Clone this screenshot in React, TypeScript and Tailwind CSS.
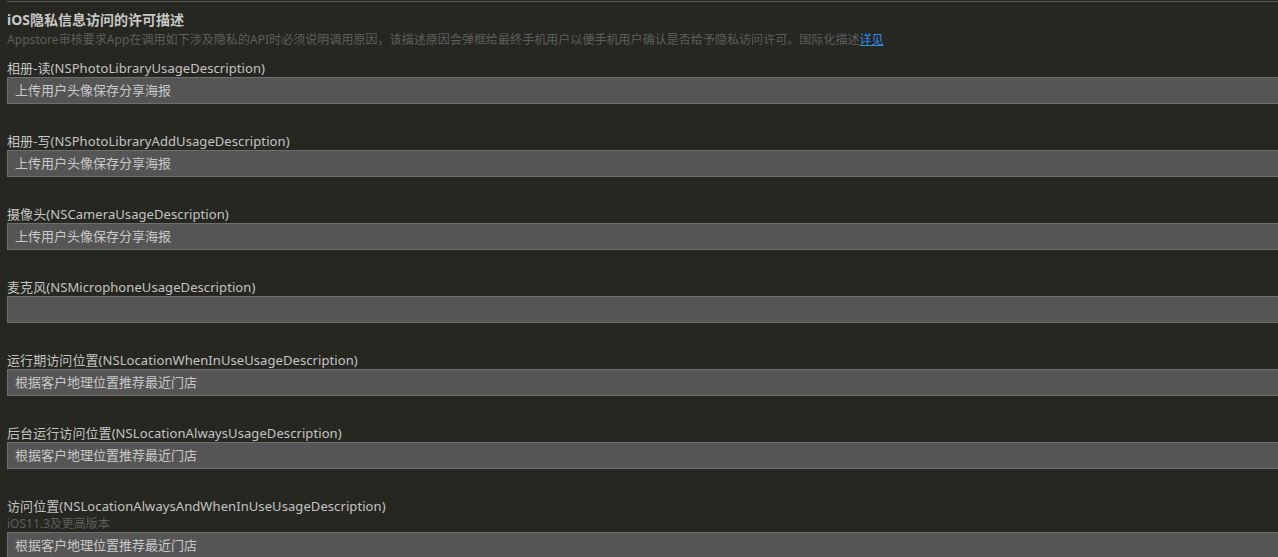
import React from 'react';

interface FieldProps {
  label: string;
  value: string;
  hint?: string;
}

const FONT = '[font-family:"Noto_Sans","Noto_Sans_CJK_SC",sans-serif]';

const fields: FieldProps[] = [
  { label: '相册-读(NSPhotoLibraryUsageDescription)', value: '上传用户头像保存分享海报' },
  { label: '相册-写(NSPhotoLibraryAddUsageDescription)', value: '上传用户头像保存分享海报' },
  { label: '摄像头(NSCameraUsageDescription)', value: '上传用户头像保存分享海报' },
  { label: '麦克风(NSMicrophoneUsageDescription)', value: '' },
  { label: '运行期访问位置(NSLocationWhenInUseUsageDescription)', value: '根据客户地理位置推荐最近门店' },
  { label: '后台运行访问位置(NSLocationAlwaysUsageDescription)', value: '根据客户地理位置推荐最近门店' },
  {
    label: '访问位置(NSLocationAlwaysAndWhenInUseUsageDescription)',
    value: '根据客户地理位置推荐最近门店',
    hint: 'iOS11.3及更高版本',
  },
];

const Field: React.FC<FieldProps> = ({ label, value, hint }) => (
  <div className="flex flex-col">
    <div className="text-[13px] leading-[18px] tracking-[0.08px] text-[#c4c4c4]">{label}</div>
    {hint && <div className="text-[12px] leading-[17px] text-[#5e5e5e]">{hint}</div>}
    <div className="-mr-2 h-[27px] border border-[#6e6e6e] bg-[#555555] pl-[7px] text-[13px] leading-[25px] text-[#c9c9c9]">
      {value}
    </div>
  </div>
);

export default function App() {
  return (
    <div className={`h-[557px] w-full overflow-hidden bg-[#272722] pl-[7px] ${FONT}`}>
      <div className="mt-px h-px bg-[#5a5a5a]" />
      <div className="mt-[8px] text-[14px] font-bold leading-[20px] text-[#c8c8c8]">iOS隐私信息访问的许可描述</div>
      <div className="mt-[2px] text-[12px] leading-[16px] tracking-[0.05px] text-[#5e5e5e]">
        Appstore审核要求App在调用如下涉及隐私的API时必须说明调用原因，该描述原因会弹框给最终手机用户以便手机用户确认是否给予隐私访问许可。国际化描述
        <span className="text-[#2f8ff0] underline">详见</span>
      </div>
      <div className="mt-[11px] flex flex-col gap-[28px]">
        {fields.map((f) => (
          <Field key={f.label} {...f} />
        ))}
      </div>
    </div>
  );
}
